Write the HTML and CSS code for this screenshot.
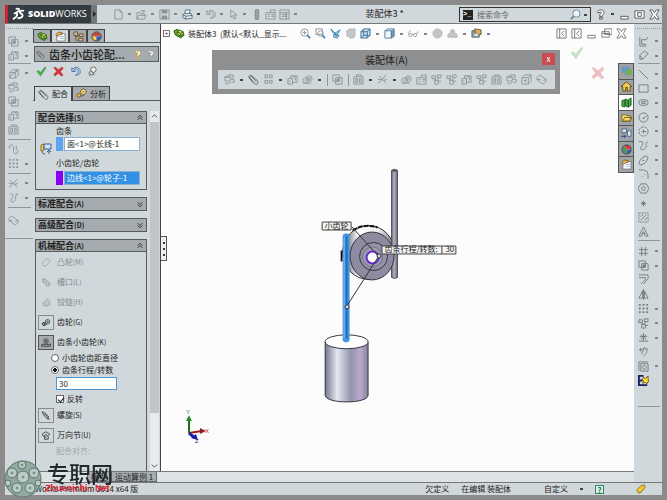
FILE: index.html
```html
<!DOCTYPE html>
<html lang="zh-CN">
<head>
<meta charset="utf-8">
<title>装配体3 - SolidWorks</title>
<link rel="stylesheet" href="styles.css">
</head>
<body>
<svg class="sprite" aria-hidden="true">
  <symbol id="new" viewBox="0 0 12 12"><path d="M2 1h5.500l2.500 2.500V11H2zM7.500 1v2.500H10"/></symbol>
  <symbol id="open" viewBox="0 0 12 12"><path d="M1 11V4h3l1 1h4v2M1 11l2-4h8l-2 4zM5 3c1-2 3-2 4 0M9 3V1M9 3H7"/></symbol>
  <symbol id="save" viewBox="0 0 12 12"><path d="M1 1h10v10H1z"/><path class="f" d="M3 1h6v4H3zM3 7h6v4H3z"/></symbol>
  <symbol id="print" viewBox="0 0 12 12"><path fill="#eef4f7" stroke="#526a79" d="M3 5l1-4h5l-1 4M1 6l2-1h7l1 2v3l-7 1-3-2zM1 6l3 2 7-1M4 8v3"/></symbol>
  <symbol id="undo" viewBox="0 0 12 12"><path d="M2 2v4h4L4.500 4.500C6 2 9 3 9 6c0 2-1 3-3 4 4 0 6-2 5-5C10 1 5 0 3.500 3.500z"/></symbol>
  <symbol id="select" viewBox="0 0 12 12"><path d="M3 1v8l2-2 1.500 4 2-1L7 6.500h2.500z"/></symbol>
  <symbol id="light" viewBox="0 0 12 12"><rect class="f" x="4" y="0" width="5" height="12" rx="2"/><circle cx="6.500" cy="3" r="1" fill="#ddd"/><circle cx="6.500" cy="6" r="1" fill="#ddd"/><circle cx="6.500" cy="9" r="1" fill="#ddd"/></symbol>
  <symbol id="props" viewBox="0 0 12 12"><path d="M1 4h10v7H1zM6 4V1h5v3M3 6h2M3 8h2M7 6h3M7 8h3"/></symbol>
  <symbol id="list" viewBox="0 0 12 12"><path d="M1 1h10v10H1zM1 4h10M3 6h6M3 8h6M8 4v7"/></symbol>
  <symbol id="mag" viewBox="0 0 12 12"><circle cx="7" cy="5" r="4" fill="#e9f5fb" stroke="#648296"/><path stroke="#648296" stroke-width="2" d="M4 8l-3 3"/></symbol>
  <symbol id="zoomfit" viewBox="0 0 12 12"><circle cx="5" cy="5" r="4"/><path d="M8 8l3 3M3 5h4M5 3v4"/><path class="b" d="M8 8l3 3"/></symbol>
  <symbol id="zoomarea" viewBox="0 0 12 12"><path d="M1 1h7v6H1z"/><circle cx="6" cy="6" r="3"/><path class="b" d="M8 8l3 3"/></symbol>
  <symbol id="prev" viewBox="0 0 12 12"><path fill="#a9cfe4" stroke="#4385ac" d="M1 1l2 4 4 2zM11 2L5 6l2 3zM4 7l6 1-2 3-4-1z"/></symbol>
  <symbol id="section" viewBox="0 0 12 12"><path fill="#c3c6c8" stroke="#bbb" d="M2 3l3-2h6v8l-2 2H5V9H2z"/></symbol>
  <symbol id="cube" viewBox="0 0 12 12"><path fill="#b8d9ee" stroke="#46708e" d="M1 4l3-3h7v7l-3 3H1zM1 4h7v7M8 4l3-3M4 1v7h7M1 11l3-3"/></symbol>
  <symbol id="box" viewBox="0 0 12 12"><path d="M1 4l3-3h7v7l-3 3H1zM1 4h7v7M8 4l3-3M3 7h3M5 6v3"/></symbol>
  <symbol id="shade" viewBox="0 0 12 12"><path fill="#edf8ff" stroke="#55778d" d="M1 3l3-2h7v8l-3 2H1z"/><path fill="#5b9cd2" d="M8 3l3-2v8l-3 2z"/><path stroke="#55778d" d="M1 3h7v8"/></symbol>
  <symbol id="glasses" viewBox="0 0 14 12"><circle cx="3" cy="8" r="2"/><circle cx="9" cy="8" r="2"/><path d="M5 7h2M1 7c0-3 1-5 3-5M11 7c0-2 1-3 3-3"/></symbol>
  <symbol id="ball" viewBox="0 0 12 12"><circle cx="6" cy="6" r="5" fill="#c2c4c5" stroke="#bbb"/></symbol>
  <symbol id="scene" viewBox="0 0 12 12"><path fill="#c2c5c7" stroke="#b0b3b5" d="M1 10V7l3-2V3l2-2 2 2v2l3 2v3z"/></symbol>
  <symbol id="display" viewBox="0 0 12 12"><path fill="#8fa0a8" stroke="#536069" d="M1 3h8v7H1z"/><path fill="#dcae55" stroke="#655537" d="M4 1l7 1v5l-6 1z"/><path fill="#e3edf0" d="M3 6h5v3H3z"/></symbol>
  <symbol id="panel" viewBox="0 0 12 12"><path d="M1 1h10v10H1zM4 1v10M9 3L6 6l3 3"/></symbol>
  <symbol id="min" viewBox="0 0 12 12"><path fill="#fff" d="M2 8h8v3H2z"/></symbol>
  <symbol id="restore" viewBox="0 0 12 12"><path fill="#fff" d="M1 2h10v8H1zM4 4h4v4H4z"/></symbol>
  <symbol id="cascade" viewBox="0 0 12 12"><path fill="#fff" d="M4 1h8v6H4zM1 4h8v6H1zM1 6h8"/></symbol>
  <symbol id="x" viewBox="0 0 12 12"><path fill="#fff" d="M1 1h3l2 3 2-3h3L8 6l3 5H8L6 8l-2 3H1l3-5z"/></symbol>
  <symbol id="help" viewBox="0 0 12 12"><path fill="#fff" d="M3 4c-1-4 7-4 7 0 0 2-2 2-2 4H5c0-3 2-3 2-4S6 3 5.500 4zM5 9h3v2H5z"/></symbol>
  <symbol id="clip" viewBox="0 0 12 12"><path stroke="#626769" d="M2 2l1-1 7 6c1 1 1 3 0 4s-2 0-3-1L2 4c-1-1 1-2 2-1l5 5M1 2v2l5 6"/></symbol>
  <symbol id="insert" viewBox="0 0 12 12"><path d="M1 3l3-1 3 2v3l-3 1-3-1zM4 2l1-1h5v3H8M1 9l2 2 4-2M8 6h3v3H8M1 3l3 1 3-1"/></symbol>
  <symbol id="pattern" viewBox="0 0 12 12"><path d="M2 1h3v3H2zM7 1h3v3H7zM2 7h3v3H2zM7 7h3v3H7z"/></symbol>
  <symbol id="parts" viewBox="0 0 12 12"><path d="M1 5h5v6H1zM4 5V2h7v7H6M6 3h3v4M3 7v2"/></symbol>
  <symbol id="gears" viewBox="0 0 12 12"><circle cx="4" cy="7" r="3"/><circle cx="8" cy="5" r="3"/><circle cx="8" cy="5" r="1"/><path d="M1 10h9M4 6v2"/></symbol>
  <symbol id="explode" viewBox="0 0 12 12"><path d="M1 2h4v3H1zM7 1h4v3H7zM4 7h4v4H4zM3 5l3 2 3-3M8 8h3"/></symbol>
  <symbol id="feature" viewBox="0 0 12 12"><path d="M1 3h10v8H1zM4 3V1h5v2M3 5h2v4H3zM7 5h2v4H7z"/></symbol>
  <symbol id="axes" viewBox="0 0 12 12"><path d="M2 2l8 8M10 1L5 7 1 10M1 6h4M7 7l4-1"/></symbol>
  <symbol id="swap" viewBox="0 0 12 12"><path d="M1 4l3-3 7 5-3 1M11 8l-3 3-7-5M1 4v2h4M11 6v2"/></symbol>
  <symbol id="copy" viewBox="0 0 12 12"><path d="M1 1h7v7H1zM4 4h7v7H4z"/><path class="f" d="M5 5h3v3H5z"/></symbol>
  <symbol id="corner" viewBox="0 0 12 12"><path d="M2 5l3-3h6v6l-3 3H2zM2 5h6v6M8 5l3-3M1 11L11 1"/></symbol>
  <symbol id="spline" viewBox="0 0 12 12"><path d="M1 4c0-4 5-4 5 0v4c0 4 5 3 5-1M1 4h2M9 7V2"/></symbol>
  <symbol id="grid" viewBox="0 0 12 12"><path class="f" d="M1 1h2v2H1zM5 1h2v2H5zM9 1h2v2H9zM1 5h2v2H1zM5 5h2v2H5zM9 5h2v2H9zM1 9h2v2H1zM5 9h2v2H5zM9 9h2v2H9z"/></symbol>
  <symbol id="curve" viewBox="0 0 12 12"><path d="M2 3c3-3 5 1 2 4-3 4 3 6 4 1l1-6M9 2l2 1"/></symbol>
  <symbol id="dim" viewBox="0 0 12 12"><path d="M2 1v10h7M4 4h5l2-3M4 4v5h5"/></symbol>
  <symbol id="pencil" viewBox="0 0 12 12"><path d="M2 6l5-5 4 3-6 6H2zM2 6l3 4"/></symbol>
  <symbol id="line" viewBox="0 0 12 12"><path d="M1 1l10 10"/></symbol>
  <symbol id="rect" viewBox="0 0 12 12"><path d="M1 2h10v8H1z"/></symbol>
  <symbol id="slot" viewBox="0 0 12 12"><rect x="1" y="3" width="10" height="6" rx="3"/><path d="M4 5h4v2H4z"/></symbol>
  <symbol id="circle" viewBox="0 0 12 12"><circle cx="6" cy="6" r="5"/><path d="M6 7l3-3M5 7h2"/></symbol>
  <symbol id="arc" viewBox="0 0 12 12"><circle cx="6" cy="6" r="5" stroke-dasharray="3 1"/><path d="M4 6h5M6 4v4"/></symbol>
  <symbol id="wave" viewBox="0 0 12 12"><path d="M1 2c6-2 5 3 2 6-1 4 5 3 6-1 0-3-1-4 2-5"/></symbol>
  <symbol id="ellipse" viewBox="0 0 12 12"><ellipse cx="6" cy="6" rx="6" ry="3" transform="rotate(-45 6 6)"/><path d="M5 6h2"/></symbol>
  <symbol id="fillet" viewBox="0 0 12 12"><path d="M1 1h4c4 0 6 2 6 6v4M4 8h1M7 6h1"/></symbol>
  <symbol id="hex" viewBox="0 0 12 12"><path d="M3 1h6l3 5-3 5H3L0 6z"/><circle cx="6" cy="6" r="2"/></symbol>
  <symbol id="point" viewBox="0 0 12 12"><path d="M6 3v6M3 6h6M4 4l4 4M8 4L4 8"/></symbol>
  <symbol id="hatch" viewBox="0 0 12 12"><path stroke-dasharray="2 1" d="M1 1h10v10H1z"/><path d="M3 5l3-3M3 9l6-6M7 9l3-3"/></symbol>
  <symbol id="text" viewBox="0 0 12 12"><path d="M1 11L6 1l5 10H8L6 6l-2 5zM4 8h4"/></symbol>
  <symbol id="trim" viewBox="0 0 12 12"><path d="M1 4h10M1 8h10M4 1v10M8 1v10"/></symbol>
  <symbol id="offset" viewBox="0 0 12 12"><path d="M1 1h10v4l-5 6M1 4h7v2l-5 5"/></symbol>
  <symbol id="mirror" viewBox="0 0 12 12"><path d="M5 2L1 10h4zM7 2l4 8H7zM6 0v12"/></symbol>
  <symbol id="relation" viewBox="0 0 12 12"><path d="M6 1v9M1 10h10M2 5h8M3 3l6 5M9 3L3 8"/></symbol>
  <symbol id="addcurve" viewBox="0 0 12 12"><path d="M1 4h4M3 2v4M6 3h4c0 5-2 6-4 8M7 1L4 9"/></symbol>
  <symbol id="snap" viewBox="0 0 12 12"><path d="M1 11V1h10M3 3h8v8H3z"/><circle cx="7" cy="7" r="2"/></symbol>
  <symbol id="e2" viewBox="0 0 12 12"><path stroke="#16205d" stroke-width="2" d="M6 1H1v10h9M1 6h4"/><path fill="#ffd932" stroke="#755611" d="M6 2l2 2 3-3v4l1 2-2 1v2L8 8l-3 1 1-2-1-2z"/></symbol>
  <symbol id="asm" viewBox="0 0 14 12"><path fill="#62ad2f" stroke="#1d4d17" d="M1 3l4-2 3 2v4l4-1 1 2-4 3-6-3z"/><path fill="#d6dc50" stroke="#2e5317" d="M5 4l3-2 4 2v3L9 9 5 7z"/><path stroke="#1d4d17" d="M5 4l4 2 3-2M9 6v3"/></symbol>
  <symbol id="hand" viewBox="0 0 12 12"><path fill="#fff" stroke="#777" d="M2 3h9v8H2z"/><path fill="#efb44d" stroke="#835f2b" d="M1 4l3-3 4 1-1 2H5L3 6z"/><path stroke="#9bb8d1" d="M5 6h5M5 8h5"/></symbol>
  <symbol id="config" viewBox="0 0 12 12"><path fill="#d8b989" stroke="#60513b" d="M1 1h4v4H1zM7 3h4v3H7zM6 8h5v3H6zM3 5v5h3M3 7l4-2"/></symbol>
  <symbol id="color" viewBox="0 0 12 12"><circle cx="6" cy="6" r="5" fill="#f7d23b"/><path fill="#df3934" d="M6 6L1 5c1-5 9-5 10 0z"/><path fill="#2a5fb7" d="M6 6l5-1c0 4-2 6-5 6z"/><circle cx="6" cy="6" r="5" stroke="#553b47"/></symbol>
  <symbol id="sphere" viewBox="0 0 12 12"><circle cx="6" cy="6" r="5" fill="#3da24b"/><path fill="#df3934" d="M6 6L3 2c3-2 8-1 8 4z"/><path fill="#2a5fb7" d="M6 6h5c0 4-2 5-5 5z"/><circle cx="6" cy="6" r="5" stroke="#553b47"/></symbol>
  <symbol id="ok" viewBox="0 0 12 12"><path fill="#43b445" stroke="#28792e" stroke-width=".5" d="M1 6l2-1 2 2 5-6 1 1-6 9z"/></symbol>
  <symbol id="cancel" viewBox="0 0 12 12"><path fill="#dd3434" stroke="#971f22" stroke-width=".5" d="M2 1l4 3 4-3 1 2-3 3 3 4-2 1-3-3-4 3-1-2 3-3-3-4z"/></symbol>
  <symbol id="pin" viewBox="0 0 12 12"><circle cx="7" cy="4" r="3" fill="#eee" stroke="#666"/><path stroke="#666" fill="#ccc" d="M4 5l4 4-3 1-3-2zM4 9l-2 2"/></symbol>
  <symbol id="analysis" viewBox="0 0 12 12"><circle cx="8" cy="4" r="3" fill="#ffe58d" stroke="#6f5525"/><circle cx="3" cy="8" r="2" fill="#edbd4b" stroke="#6f5525"/><path stroke="#6f5525" d="M5 9l4-1M7 4h2"/></symbol>
  <symbol id="mates" viewBox="0 0 12 12"><path fill="#f2cf53" stroke="#8d762c" d="M1 2l3-1v6l-3 1z"/><path fill="#cfe3f8" stroke="#365e8b" d="M4 1h7v5H4z"/><path stroke="#2c62a2" d="M2 8c0 2 1 3 3 3M9 11V7M7 9l2-2 2 2"/></symbol>
  <symbol id="cam" viewBox="0 0 12 12"><path d="M2 10C0 7 3 2 8 1c3 0 4 2 2 5s-5 6-8 4z"/></symbol>
  <symbol id="slotmate" viewBox="0 0 12 12"><path d="M1 3c0-3 4-3 5-1l5 5c2 3-2 5-4 3L2 5z"/><circle cx="4" cy="4" r="2"/><circle cx="8" cy="8" r="2"/></symbol>
  <symbol id="hinge" viewBox="0 0 12 12"><path d="M1 8l3-3 4 5-3 1zM4 5l2-2 5 6-3 1M6 3l2-2 3 4v4M3 7l3 3"/></symbol>
  <symbol id="gear" viewBox="0 0 12 12"><circle cx="8" cy="5" r="3"/><circle cx="8" cy="5" r="1"/><circle cx="3" cy="8" r="2"/><path d="M1 9l2-3 2 3M2 10h3l2-2M3 8h2"/></symbol>
  <symbol id="rack" viewBox="0 0 12 12"><path d="M0 11V9h2V8h2v1h2V8h2v1h2V8h2v3z"/><circle cx="6" cy="4" r="3"/><circle cx="6" cy="4" r="1"/></symbol>
  <symbol id="screw" viewBox="0 0 12 12"><path d="M1 1l3 1 5 6v3L6 9 2 4zM3 5l3-2M5 7l3-2M7 9l3-2M9 10l2 1"/></symbol>
  <symbol id="ujoint" viewBox="0 0 12 12"><path d="M1 4l5-3 5 3-2 2v5H4V7H2zM4 7c0-3 4-3 4 0M6 6v4"/></symbol>
  <symbol id="chat" viewBox="0 0 12 12"><path fill="#54a0da" d="M1 1h8v6H1z"/><path fill="#68b842" d="M5 4h7v5H9l-2 2V9H5z"/></symbol>
  <symbol id="home" viewBox="0 0 12 12"><path fill="#f3ce54" stroke="#66470c" d="M0 6l6-5 6 5h-2v5H7V7H5v4H2V6z"/></symbol>
  <symbol id="library" viewBox="0 0 12 12"><path fill="#4caf44" stroke="#175e1c" d="M1 4l3-1v8l-3-1zM5 2l3 2v7l-3-1zM8 3l3-2v8l-3 2z"/></symbol>
  <symbol id="folder" viewBox="0 0 12 12"><path fill="#f9df68" stroke="#7a641d" d="M1 3h4l1 1h4v6H1zM2 10l2-4h8l-2 4z"/></symbol>
  <symbol id="palette" viewBox="0 0 12 12"><path fill="#d7e6f3" stroke="#526278" d="M1 1h5v4H1zM7 3h4v6H7z"/><path stroke="#1c3fa0" d="M0 9h5M3 7l2 2-2 2"/></symbol>
</svg>

<div class="window">
  <header class="titlebar">
    <h1 class="brand"><svg viewBox="0 0 14 14"><path d="M4 1c4-1 5 1 2 3L3 6M2 6c5-2 5 3-1 6M13 3c-4-1-6 2-3 3 3 2 1 5-4 5"/></svg><span><b>SOLID</b>WORKS</span></h1>
    <button class="brand-more" aria-label="菜单"></button>
    <nav class="tools quick">
      <button aria-label="新建"><svg><use href="#new"/></svg></button><i class="caret"></i>
      <button aria-label="打开"><svg><use href="#open"/></svg></button><i class="caret"></i>
      <button aria-label="保存"><svg><use href="#save"/></svg></button><i class="caret"></i>
      <button aria-label="打印"><svg><use href="#print"/></svg></button><i class="caret dark"></i>
      <button aria-label="撤销"><svg><use href="#undo"/></svg></button><i class="caret"></i>
      <button aria-label="选择"><svg><use href="#select"/></svg></button><i class="caret"></i>
      <button aria-label="重建模型"><svg><use href="#light"/></svg></button>
      <button aria-label="文件属性"><svg><use href="#props"/></svg></button>
      <button aria-label="选项"><svg><use href="#list"/></svg></button><i class="caret"></i>
    </nav>
    <div class="doc-title">装配体3 *</div>
    <div class="search">
      <span class="prompt" aria-hidden="true">&gt;_</span>
      <input type="text" placeholder="搜索命令" aria-label="搜索命令">
      <button aria-label="搜索"><svg><use href="#mag"/></svg></button><i class="caret dark"></i>
    </div>
    <div class="tools system">
      <button aria-label="帮助"><svg><use href="#help"/></svg></button><i class="caret dark"></i>
      <button aria-label="最小化"><svg><use href="#min"/></svg></button>
      <button aria-label="还原"><svg><use href="#restore"/></svg></button>
      <button aria-label="关闭"><svg><use href="#x"/></svg></button>
    </div>
  </header>

  <div class="work">
    <nav class="side left">
      <div class="side-group two">
        <div><svg><use href="#copy"/></svg><i class="caret"></i></div>
        <div><svg><use href="#parts"/></svg><i class="caret"></i></div>
      </div>
      <div class="side-group five">
        <div><svg><use href="#corner"/></svg><i class="caret"></i></div>
        <div><svg><use href="#insert"/></svg></div>
        <div><svg><use href="#copy"/></svg></div>
        <div><svg><use href="#parts"/></svg></div>
        <div><svg><use href="#feature"/></svg></div>
      </div>
      <div class="side-group pair">
        <div><svg><use href="#spline"/></svg></div>
        <div><svg><use href="#grid"/></svg><i class="caret"></i></div>
      </div>
      <div class="side-group pair">
        <div><svg><use href="#axes"/></svg><i class="caret"></i></div>
        <div><svg><use href="#curve"/></svg><i class="caret"></i></div>
      </div>
      <div class="side-group last">
        <div><svg><use href="#swap"/></svg></div>
      </div>
    </nav>

    <div class="main">
      <div class="split">
        <section class="panel">
          <div class="manager-tabs">
            <button aria-label="设计树"><svg><use href="#asm"/></svg></button>
            <button class="on" aria-label="属性"><svg><use href="#hand"/></svg></button>
            <button aria-label="配置"><svg><use href="#config"/></svg></button>
            <button aria-label="外观"><svg><use href="#color"/></svg></button>
          </div>
          <div class="panel-title"><svg><use href="#clip"/></svg><h2>齿条小齿轮配...</h2><svg class="tip"><use href="#help"/></svg><svg><use href="#help"/></svg></div>
          <div class="actions">
            <button aria-label="确定"><svg><use href="#ok"/></svg></button>
            <button aria-label="取消"><svg><use href="#cancel"/></svg></button>
            <button class="blue" aria-label="撤销"><svg><use href="#undo"/></svg></button>
            <button aria-label="保持可见"><svg><use href="#pin"/></svg></button>
          </div>
          <div class="page-tabs">
            <button class="on"><svg><use href="#clip"/></svg>配合</button>
            <button><svg><use href="#analysis"/></svg>分析</button>
          </div>
          <div class="scroll">
            <div class="groups">
              <section class="group">
                <button class="head"><span>配合选择<small>(S)</small></span><svg class="chev" viewBox="0 0 8 8"><path d="M1 4l3-3 3 3M1 7l3-3 3 3"/></svg></button>
                <div class="selection">
                  <svg><use href="#mates"/></svg>
                  <div class="fields">
                    <label for="rack-f">齿条</label>
                    <div class="field"><i class="swatch sky"></i><input id="rack-f" type="text" value="面&lt;1&gt;@长线-1"></div>
                    <label for="pinion-f">小齿轮/齿轮</label>
                    <div class="field active"><i class="swatch violet"></i><input id="pinion-f" type="text" value="边线&lt;1&gt;@轮子-1"></div>
                  </div>
                </div>
              </section>
              <section class="group"><button class="head"><span>标准配合<small>(A)</small></span><svg class="chev" viewBox="0 0 8 8"><path d="M1 1l3 3 3-3M1 4l3 3 3-3"/></svg></button></section>
              <section class="group"><button class="head"><span>高级配合<small>(D)</small></span><svg class="chev" viewBox="0 0 8 8"><path d="M1 1l3 3 3-3M1 4l3 3 3-3"/></svg></button></section>
              <section class="group open">
                <button class="head"><span>机械配合<small>(A)</small></span><svg class="chev" viewBox="0 0 8 8"><path d="M1 4l3-3 3 3M1 7l3-3 3 3"/></svg></button>
                <div class="mates">
                  <button disabled><svg><use href="#cam"/></svg><span>凸轮<small>(M)</small></span></button>
                  <button disabled><svg><use href="#slotmate"/></svg><span>槽口<small>(L)</small></span></button>
                  <button disabled><svg><use href="#hinge"/></svg><span>铰链<small>(H)</small></span></button>
                  <button><svg><use href="#gear"/></svg><span>齿轮<small>(G)</small></span></button>
                  <button class="pressed"><svg><use href="#rack"/></svg><span>齿条小齿轮<small>(K)</small></span></button>
                  <div class="options">
                    <label><input type="radio" name="mode">小齿轮齿距直径</label>
                    <label><input type="radio" name="mode" checked>齿条行程/转数</label>
                    <input class="amount" type="text" value="30" aria-label="齿条行程/转数">
                    <label class="flip"><input type="checkbox" checked>反转</label>
                  </div>
                  <button><svg><use href="#screw"/></svg><span>螺旋<small>(S)</small></span></button>
                  <button><svg><use href="#ujoint"/></svg><span>万向节<small>(U)</small></span></button>
                  <p class="align">配合对齐:</p>
                </div>
              </section>
            </div>
            <div class="scrollbar"><svg viewBox="0 0 8 8"><path d="M1 5l3-3 3 3"/></svg><i></i><svg viewBox="0 0 8 8"><path d="M1 3l3 3 3-3"/></svg></div>
          </div>
        </section>

        <main class="canvas">
          <svg class="model" viewBox="161 24 472 448" role="img" aria-label="齿条与小齿轮模型">
            <defs>
              <linearGradient id="cyl"><stop offset="0" stop-color="#77778c"/><stop offset=".28" stop-color="#e5e9f3"/><stop offset=".6" stop-color="#9395ab"/><stop offset=".82" stop-color="#bba9cd"/><stop offset="1" stop-color="#858398"/></linearGradient>
              <linearGradient id="rod"><stop offset="0" stop-color="#666676"/><stop offset=".45" stop-color="#b1b1c3"/><stop offset="1" stop-color="#646370"/></linearGradient>
              <linearGradient id="rim"><stop offset="0" stop-color="#444450"/><stop offset=".3" stop-color="#fff"/><stop offset=".7" stop-color="#eee"/><stop offset="1" stop-color="#777"/></linearGradient>
            </defs>
            <path fill="url(#cyl)" stroke="#343440" d="M324.500 343v53c0 9 43 9 43 0v-53"/>
            <ellipse cx="346" cy="342.500" rx="21.500" ry="7" fill="#fff" stroke="#343440"/>
            <ellipse cx="368" cy="253" rx="26" ry="27" fill="url(#rim)" stroke="#333"/>
            <path fill="none" stroke="#111" stroke-width="2" d="M341 262v-11"/>
            <path fill="none" stroke="#111" stroke-width="2" stroke-dasharray="5 1" d="M352 231c7-5 17-6 25-3"/>
            <path fill="url(#rod)" stroke="#555463" d="M391 171q3-3 6 0v107q-3 2-6 0z"/>
            <path fill="#555" d="M391 170h6v2h-6z"/>
            <ellipse cx="371.500" cy="256.500" rx="22" ry="24" fill="#8c8b9f" stroke="#353441"/>
            <circle cx="373" cy="257" r="14" fill="#9392a6" stroke="#353441"/>
            <circle cx="372" cy="257.500" r="10" fill="#9c9bad" stroke="#777687"/>
            <circle cx="372" cy="258" r="6" fill="#fff" stroke="#6b2bd6" stroke-width="2"/>
            <rect x="342" y="234" width="7" height="109" rx="3" fill="#4196e0"/>
            <path stroke="#236fb8" stroke-width="2" d="M346 237v102"/>
            <path stroke="#7bbcf0" d="M343.500 237v102"/>
            <path fill="none" stroke="#333" d="M351 227l27 30-32 50"/>
            <circle cx="378.500" cy="256.500" r="2" fill="#ddd" stroke="#333"/>
            <circle cx="346.500" cy="307.500" r="2" fill="#ddd" stroke="#333"/>
            <g class="callout">
              <path d="M321.500 222.500h29v8h-29zM381.500 246.500h74v8h-74zM441.500 246.500v8"/>
              <text x="324" y="229">小齿轮</text><text x="384" y="253">齿条行程/转数:</text><text x="445" y="253">30</text>
            </g>
            <g class="triad">
              <path d="M188 434v-15" stroke="#16681b" stroke-width="2"/><path d="M185 422l3-6 3 6z" fill="#24872b"/>
              <path d="M188 434l13-2" stroke="#a61b1b" stroke-width="2"/><path d="M199 429l6 3-6 3z" fill="#952020"/>
              <path d="M188 434l5 4" stroke="#1e22a5" stroke-width="3"/><path d="M190 439l7 2-2-6z" fill="#171da6"/>
              <text x="185" y="415" fill="#267a2d">Y</text><text x="204" y="434" fill="#b22">X</text><text x="194" y="444" fill="#228">Z</text>
            </g>
          </svg>
          <div class="view-bar">
            <div class="tree"><span class="plus">+</span><svg><use href="#asm"/></svg><span>装配体3&nbsp; (默认&lt;默认_显示...</span></div>
            <div class="tools">
              <button aria-label="整屏显示"><svg><use href="#zoomfit"/></svg></button>
              <button aria-label="局部放大"><svg><use href="#zoomarea"/></svg></button>
              <button aria-label="上一视图"><svg><use href="#prev"/></svg></button>
              <button aria-label="剖面视图"><svg><use href="#section"/></svg></button>
              <button aria-label="视图定向"><svg><use href="#cube"/></svg></button><i class="caret"></i>
              <button aria-label="显示样式"><svg><use href="#shade"/></svg></button><i class="caret"></i>
              <button aria-label="隐藏项目"><svg><use href="#glasses"/></svg></button><i class="caret"></i>
              <button aria-label="编辑外观"><svg><use href="#ball"/></svg></button>
              <button aria-label="应用布景"><svg><use href="#scene"/></svg></button><i class="caret"></i>
              <button aria-label="视图设定"><svg><use href="#display"/></svg></button><i class="caret"></i>
            </div>
            <div class="tools doc-controls">
              <button aria-label="左窗格"><svg><use href="#panel"/></svg></button>
              <button aria-label="右窗格"><svg><use href="#panel"/></svg></button>
              <button aria-label="最小化文档"><svg><use href="#min"/></svg></button>
              <button aria-label="还原文档"><svg><use href="#cascade"/></svg></button>
              <button aria-label="关闭文档"><svg><use href="#x"/></svg></button>
            </div>
          </div>
          <section class="floating">
            <header><h2>装配体(A)</h2><button aria-label="关闭工具栏">x</button></header>
            <div class="tools">
              <button aria-label="插入零部件"><svg><use href="#insert"/></svg></button><i class="caret dark"></i>
              <button aria-label="配合"><svg><use href="#clip"/></svg></button>
              <button aria-label="阵列"><svg><use href="#pattern"/></svg></button><i class="caret dark"></i>
              <button aria-label="智能扣件"><svg><use href="#parts"/></svg></button>
              <button aria-label="移动"><svg><use href="#gears"/></svg></button><i class="caret dark"></i>
              <i class="sep"></i>
              <button aria-label="显示隐藏"><svg><use href="#copy"/></svg></button>
              <i class="sep"></i>
              <button aria-label="装配体特征"><svg><use href="#feature"/></svg></button><i class="caret dark"></i>
              <button aria-label="参考几何体"><svg><use href="#axes"/></svg></button><i class="caret dark"></i>
              <button aria-label="运动算例"><svg><use href="#gears"/></svg></button>
              <button aria-label="材料明细表"><svg><use href="#props"/></svg></button>
              <button aria-label="爆炸视图"><svg><use href="#explode"/></svg></button>
              <button aria-label="爆炸直线"><svg><use href="#explode"/></svg></button>
              <button aria-label="干涉检查"><svg><use href="#parts"/></svg></button>
              <button aria-label="间隙验证"><svg><use href="#explode"/></svg></button>
              <button aria-label="孔对齐"><svg><use href="#feature"/></svg></button>
              <button aria-label="可视化"><svg><use href="#insert"/></svg></button>
              <button aria-label="性能评估"><svg><use href="#box"/></svg></button>
              <button aria-label="带编辑"><svg><use href="#swap"/></svg></button>
            </div>
          </section>
          <button class="confirm yes" aria-label="接受"><svg><use href="#ok"/></svg></button>
          <button class="confirm no" aria-label="放弃"><svg><use href="#cancel"/></svg></button>
          <nav class="task-tabs">
            <button aria-label="论坛"><svg><use href="#chat"/></svg></button>
            <button aria-label="资源"><svg><use href="#home"/></svg></button>
            <button class="on" aria-label="设计库"><svg><use href="#library"/></svg></button>
            <button aria-label="文件"><svg><use href="#folder"/></svg></button>
            <button aria-label="视图调色板"><svg><use href="#palette"/></svg></button>
            <button aria-label="外观布景"><svg><use href="#sphere"/></svg></button>
            <button aria-label="自定义属性"><svg><use href="#hand"/></svg></button>
          </nav>
          <button class="collapse" aria-label="折叠面板"><i></i><i></i><i></i></button>
        </main>
      </div>
      <div class="sheets"><button>模型</button><button>运动算例 1</button></div>
    </div>

    <nav class="side right">
      <div class="side-group two">
        <div><svg><use href="#dim"/></svg><i class="caret"></i></div>
        <div><svg><use href="#pencil"/></svg><i class="caret"></i></div>
      </div>
      <div class="side-group twelve">
        <div><svg><use href="#line"/></svg><i class="caret"></i></div>
        <div><svg><use href="#rect"/></svg><i class="caret"></i></div>
        <div><svg><use href="#slot"/></svg><i class="caret"></i></div>
        <div><svg><use href="#circle"/></svg><i class="caret"></i></div>
        <div><svg><use href="#arc"/></svg><i class="caret"></i></div>
        <div><svg><use href="#wave"/></svg><i class="caret"></i></div>
        <div><svg><use href="#ellipse"/></svg><i class="caret"></i></div>
        <div><svg><use href="#fillet"/></svg><i class="caret"></i></div>
        <div><svg><use href="#hex"/></svg></div>
        <div><svg><use href="#point"/></svg></div>
        <div><svg><use href="#hatch"/></svg></div>
        <div><svg><use href="#text"/></svg></div>
      </div>
      <div class="side-group ten">
        <div><svg><use href="#trim"/></svg><i class="caret"></i></div>
        <div><svg><use href="#copy"/></svg><i class="caret"></i></div>
        <div><svg><use href="#offset"/></svg></div>
        <div><svg><use href="#mirror"/></svg></div>
        <div><svg><use href="#grid"/></svg><i class="caret"></i></div>
        <div><svg><use href="#explode"/></svg><i class="caret"></i></div>
        <div><svg><use href="#relation"/></svg><i class="caret"></i></div>
        <div><svg><use href="#addcurve"/></svg></div>
        <div><svg><use href="#snap"/></svg><i class="caret"></i></div>
        <div><svg><use href="#e2"/></svg></div>
      </div>
    </nav>
  </div>

  <footer class="status">
    <span class="version">SolidWorks Premium 2014 x64 版</span>
    <span>欠定义</span><span class="editing">在编辑 装配体</span><span>自定义</span><i class="caret dark up"></i>
    <b class="q">?</b>
    <svg class="tag" viewBox="0 0 12 12"><path fill="#f5c330" stroke="#876413" d="M1 7l5-5 4-1 1 3-5 6-3 1z"/></svg>
  </footer>
</div>

<div class="watermark">
  <svg viewBox="0 0 38 38"><circle cx="19" cy="19" r="18" fill="#93aaa2" stroke="#5c756c"/><g fill="#b9cbc4" stroke="#59736a"><circle cx="19" cy="17" r="6"/><circle cx="8" cy="13" r="5"/><circle cx="30" cy="13" r="5"/><circle cx="13" cy="28" r="5"/><circle cx="26" cy="28" r="5"/><circle cx="18" cy="5" r="4"/><circle cx="4" cy="23" r="3"/><circle cx="34" cy="23" r="3"/></g><g fill="#455e55"><circle cx="19" cy="17" r="1"/><circle cx="8" cy="13" r="1"/><circle cx="30" cy="13" r="1"/><circle cx="13" cy="28" r="1"/><circle cx="26" cy="28" r="1"/><circle cx="18" cy="5" r="1"/></g></svg>
  <div><strong>专职网</strong><em>Zhuenichi . Net</em></div>
</div>
</body>
</html>
```
FILE: styles.css
```css
:root {
  --face: #d1d8db;
  --line: #555b5e;
  --icon: #8c9498;
}

* { box-sizing: border-box; }

body {
  margin: 0;
  background: #8b8b8b;
  color: #222;
  font: 8px/12px "Noto Sans CJK SC", sans-serif;
}

h1, h2, p { margin: 0; font-size: inherit; font-weight: normal; }
button, input { font: inherit; color: inherit; margin: 0; padding: 0; border: 0; background: none; }
small { font-size: 7px; }

svg { display: block; width: 11px; height: 11px; flex: none; fill: none; stroke: var(--icon); overflow: visible; }
.sprite { position: absolute; width: 0; height: 0; }
.f { fill: var(--icon); stroke: none; }
.b { stroke: #4385ac; stroke-width: 2; }

.caret { flex: none; width: 9px; height: 3px; background: linear-gradient(#7d8588, #7d8588) center / 3px 2px no-repeat; }
.caret.dark { background-image: linear-gradient(#444, #444); }

.window { min-height: 100vh; display: flex; flex-direction: column; border: 5px solid #8b8b8b; background: var(--face); }

/* title bar */
.titlebar { display: flex; align-items: stretch; height: 19px; flex: none; border-bottom: 1px solid #777; }
.brand { display: flex; align-items: center; gap: 3px; width: 86px; padding-left: 4px; border-left: 3px solid #cf2231; background: #343c41; color: #fff; font: 9px/12px "Open Sans", sans-serif; }
.brand svg { width: 13px; height: 13px; stroke: #fff; stroke-width: 2; }
.brand b { font-weight: 800; }
.brand-more { width: 6px; background: #72797c; }
.brand-more::before { content: ""; display: block; border: 3px solid transparent; border-left-color: #222; margin-left: 2px; }
.tools { display: flex; align-items: center; }
.tools button { display: flex; justify-content: center; flex: none; width: 15px; }
.quick { padding-left: 14px; }
.quick button { width: 14px; }
.doc-title { flex: 1; align-self: center; padding-left: 10px; text-align: center; font-size: 9px; }
.search { display: flex; align-items: center; width: 132px; margin: 2px 0 1px; border: 1px solid #333; }
.search .prompt { width: 10px; height: 10px; margin: 0 4px 0 3px; background: #222; color: #fff; font: bold 7px/9px "Liberation Mono", monospace; }
.search input { flex: 1; min-width: 0; }
.search input::placeholder { color: #666; opacity: 1; }
.system { padding-left: 2px; --icon: #555; }

/* docked toolbars */
.work { flex: 1; display: flex; min-height: 0; }
.side { flex: none; width: 28px; padding: 10px 2px 0 3px; background: linear-gradient(90deg, #999 50%, transparent 0) 3px 4px / 2px 1px repeat-x; }
.side.right { --icon: #737b7f; padding-left: 4px; }
.side-group { display: grid; grid-auto-rows: 1fr; border-bottom: 1px solid #8f979a; }
.side-group > div { display: flex; align-items: center; min-height: 0; }
.side-group .caret { margin-left: 3px; }
.two { height: 30px; }
.five { height: 76px; padding: 2px 0; }
.pair { height: 34px; padding: 2px 0; }
.last { height: 31px; padding-bottom: 6px; margin: 0 -2px 0 -3px; padding-left: 3px; }
.twelve { height: 177px; padding: 3px 0 1px; }
.ten { height: 166px; padding: 3px 0 18px; }

.main { flex: 1; min-width: 0; display: flex; flex-direction: column; }
.split { flex: 1; display: flex; }
.sheets { display: flex; justify-content: flex-start; height: 11px; padding-left: 54px; border-top: 1px solid #777; background: #dde2e5; }
.sheets button { padding: 0 3px; border: 1px solid #60666a; border-top: 0; background: #a6acb0; line-height: 9px; }

/* property panel */
.panel { flex: none; width: 128px; display: flex; flex-direction: column; border-right: 1px solid #444; }
.manager-tabs { display: flex; height: 19px; padding-top: 5px; border-bottom: 1px solid var(--line); }
.manager-tabs button { display: grid; place-items: center; width: 18px; border: 1px solid #444; border-bottom: 0; background: #a5abae; }
.manager-tabs button.on { background: var(--face); }
.panel-title { display: flex; align-items: center; gap: 4px; height: 16px; margin: 3px 1px 0; padding: 0 3px 0 1px; border: 1px solid var(--line); background: #a5abae; }
.panel-title h2 { flex: 1; min-width: 0; font: 500 11px/14px "Noto Sans CJK SC", sans-serif; white-space: nowrap; }
.panel-title .tip { stroke: #c9992c; }
.panel-title svg { width: 9px; }
.actions { display: flex; gap: 6px; padding: 4px 3px 0; height: 24px; }
.actions .blue { --icon: #3f6ea8; }
.actions button { width: 11px; height: 11px; }
.page-tabs { display: flex; height: 15px; border-bottom: 1px solid var(--line); padding-left: 1px; }
.page-tabs button { display: flex; align-items: center; gap: 3px; padding: 0 3px; border: 1px solid #444; border-bottom: 0; background: #a5abae; }
.page-tabs .on { background: var(--face); margin-bottom: -1px; }
.scroll { flex: 1; display: flex; padding: 10px 1px 0 2px; gap: 3px; }
.groups { flex: 1; min-width: 0; display: flex; flex-direction: column; gap: 7px; }
.group { border: 1px solid var(--line); }
.group.open { flex: 1; border-bottom: 0; }
.head { display: flex; align-items: center; justify-content: space-between; width: 100%; height: 12px; padding: 0 3px 0 2px; background: #a5abae; font: bold 9px/12px "Noto Sans CJK SC", sans-serif; }
.group.open .head, .group:first-child .head { border-bottom: 1px solid var(--line); }
.chev { width: 6px; height: 7px; stroke: #111; }
.selection { display: flex; align-items: center; gap: 4px; padding: 0 6px 4px 4px; }
.selection > svg { margin-bottom: 12px; width: 12px; height: 12px; }
.fields { flex: 1; min-width: 0; }
.fields label { display: block; line-height: 13px; height: 13px; }
.fields label + .field { margin-bottom: 5px; }
.field { display: flex; gap: 1px; height: 14px; }
.fields .field:last-child { margin: 2px 0 0; }
.swatch { width: 7px; }
.sky { background: #5aa4f0; }
.violet { background: #8a00f0; }
.field input { flex: 1; min-width: 0; padding-left: 2px; border: 1px solid #8bb1ce; background: #fff; }
.field.active input { background: #3291e4; color: #fff; }
.mates { display: flex; flex-direction: column; padding-left: 2px; }
.mates button { display: flex; align-items: center; gap: 3px; height: 20px; text-align: left; --icon: #333; }
.mates button svg { width: 16px; height: 15px; padding: 2px; border: 1px solid #858c90; }
.mates button:disabled { color: #858b8e; --icon: #92999d; }
.mates button:disabled svg { border-color: transparent; }
.mates .pressed svg { background: #a5abae; border-color: #555; }
.options { display: flex; flex-direction: column; padding: 0 4px 0 13px; }
.options label { display: flex; align-items: center; gap: 3px; }
.options input[type="radio"], .options input[type="checkbox"] { appearance: none; width: 8px; height: 8px; border: 1px solid #666; background: #fff; }
.options input[type="radio"] { border-radius: 50%; }
.options input[type="radio"]:checked { background: radial-gradient(#111 2px, #fff 2px); }
.options input[type="checkbox"]:checked::before { content: ""; display: block; width: 3px; height: 5px; margin-left: 2px; border: solid #111; border-width: 0 1px 1px 0; transform: rotate(40deg); }
.options .amount { width: 61px; height: 13px; margin: 1px 0 3px 5px; padding-left: 2px; border: 1px solid #4b98d5; background: #fff; }
.options .flip { margin-left: 5px; }
.mates .align { padding-left: 18px; color: #a0a7aa; }
.scrollbar { width: 9px; display: flex; flex-direction: column; align-items: center; background: #e8ebec; }
.scrollbar svg { width: 7px; height: 11px; padding: 1px 0; stroke: #444; }
.scrollbar i { width: 9px; flex: 1; background: linear-gradient(#c2c5c6 86%, #e8ebec 0); }

/* graphics area */
.canvas { position: relative; flex: 1; min-width: 0; background: #fcfcfc; }
.model { position: absolute; inset: 0; width: 100%; height: 100%; stroke: none; }
.callout path { fill: #f4f4f4; stroke: #444; }
.callout text { font-size: 8px; fill: #222; }
.triad text { font: 6px "Liberation Sans", sans-serif; }
.view-bar { position: relative; display: flex; align-items: center; height: 18px; padding: 1px 5px 0 2px; }
.tree { display: flex; align-items: center; gap: 3px; width: 135px; white-space: nowrap; }
.tree svg { width: 12px; }
.plus { width: 7px; height: 7px; border: 1px solid #777; font: 6px/5px "Liberation Sans", sans-serif; text-align: center; }
.doc-controls { margin-left: auto; --icon: #777; }
.floating { position: absolute; top: 26px; left: 51px; right: 74px; padding: 0 5px 5px 6px; background: #8d8f90; }
.floating header { display: flex; align-items: center; height: 20px; }
.floating h2 { flex: 1; padding-left: 13px; text-align: center; font-size: 10px; color: #222; }
.floating header button { width: 13px; height: 12px; margin-bottom: 2px; background: #c84c50; color: #fff; font-size: 8px; line-height: 10px; }
.floating .tools { height: 19px; padding-left: 4px; background: var(--face); }
.sep { width: 6px; height: 12px; background: linear-gradient(#8c9498, #8c9498) center / 1px 12px no-repeat; }
.confirm { position: absolute; opacity: .3; }
.confirm svg { width: 16px; height: 14px; }
.yes { top: 22px; right: 49px; }
.no { top: 42px; right: 28px; }
.task-tabs { position: absolute; top: 39px; right: 0; width: 16px; height: 110px; display: grid; grid-auto-rows: 1fr; border: 1px solid #555; border-top: 0; }
.task-tabs button { display: grid; place-items: center; min-height: 0; border-top: 1px solid #555; background: #9da3a6; }
.task-tabs .on { background: #fff; }
.collapse { position: absolute; left: 0; top: 212px; width: 6px; height: 25px; display: grid; place-content: center; gap: 4px; border: 1px solid #555; border-left: 0; background: #eef0f1; }
.collapse i { width: 2px; height: 2px; background: #333; }

/* status bar */
.status { display: flex; align-items: center; height: 13px; flex: none; padding-right: 16px; border-top: 1px solid #777; white-space: nowrap; }
.version { flex: 1; padding-left: 11px; }
.editing { margin: 0 33px 0 12px; }
.status .caret { margin: 0 9px; }
.q { width: 9px; height: 9px; margin-right: 32px; border: 1px solid #368067; background: #d5f2e2; color: #197348; text-align: center; line-height: 7px; }
.tag { width: 10px; height: 10px; }

.watermark { position: fixed; left: 4px; bottom: 2px; display: flex; gap: 3px; }
.watermark > svg { width: 38px; height: 38px; }
.watermark > div { display: flex; flex-direction: column; }
.watermark strong { color: #222a2d; font: 500 22px/24px "Noto Sans CJK SC", sans-serif; padding-left: 2px; }
.watermark em { color: #e3202c; font: bold 9px/9px "Liberation Sans", sans-serif; }
```
